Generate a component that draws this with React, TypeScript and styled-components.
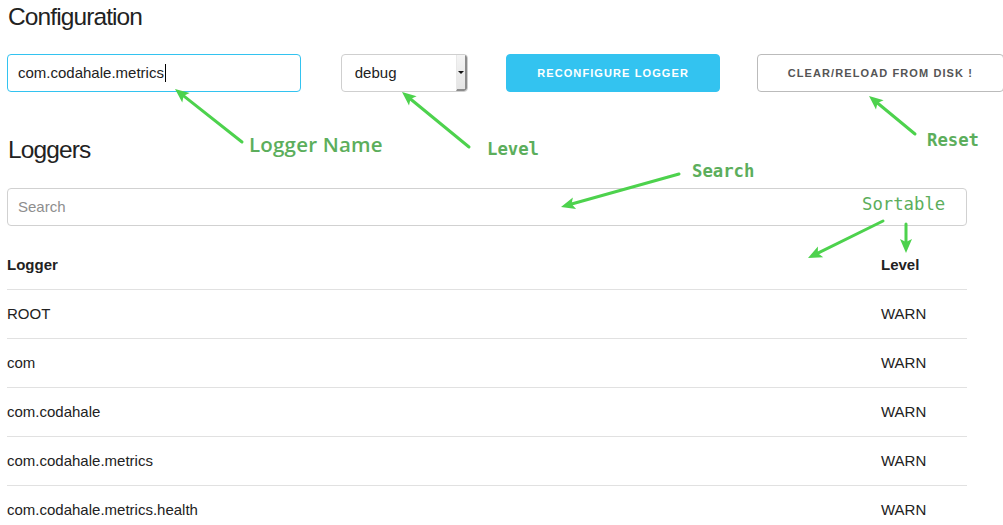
import React from "react";
import styled, { createGlobalStyle } from "styled-components";

const GlobalStyle = createGlobalStyle`
  html, body { margin: 0; padding: 0; background: #fff; }
  body {
    font-family: "Liberation Sans", Arial, Helvetica, sans-serif;
    font-size: 15px;
    line-height: 1.6;
    color: #222;
  }
  * { box-sizing: border-box; }
`;

const Page = styled.div`
  position: relative;
  width: 1003px;
  height: 525px;
  overflow: hidden;
`;

const Container = styled.div`
  width: 960px;
  margin-left: 7px;
  display: flex;
  flex-direction: column;
`;

const Heading = styled.h3<{ $top: number; $bottom: number }>`
  margin: ${(p) => p.$top}px 0 ${(p) => p.$bottom}px 1px;
  font-size: 24.5px;
  font-weight: 400;
  line-height: 30px;
  letter-spacing: -0.9px;
  color: #222;
`;

const ControlRow = styled.div`
  display: grid;
  grid-template-columns: 30.6667% 13.3333% 22% 1fr;
  column-gap: 4%;
  align-items: center;
`;

const FakeInput = styled.div<{ $focused?: boolean }>`
  height: 38px;
  padding: 0 10px;
  display: flex;
  align-items: center;
  background: #fff;
  border: 1px solid ${(p) => (p.$focused ? "#33C3F0" : "#D1D1D1")};
  border-radius: 4px;
  font-size: 15px;
  color: #222;
  white-space: nowrap;
`;

const Caret = styled.span`
  display: inline-block;
  width: 1px;
  height: 18px;
  margin-left: 1px;
  background: #000;
`;

const SelectBox = styled.div`
  height: 38px;
  display: flex;
  align-items: stretch;
  border: 1px solid #cfcfcf;
  border-radius: 4px;
  background: #fff;
  overflow: hidden;
  margin-left: 1px;
  width: 127px;
`;

const SelectValue = styled.span`
  flex: 1;
  display: flex;
  align-items: center;
  padding-left: 13px;
  font-size: 15px;
  color: #222;
`;

const SelectArrow = styled.span`
  width: 11px;
  display: flex;
  align-items: center;
  justify-content: center;
  background: linear-gradient(#f4f4f4, #e4e4e4);
  border-right: 2px solid #8c8c8c;
  border-bottom: 2px solid #8c8c8c;
  border-left: 1px solid #e8e8e8;
  border-bottom-right-radius: 3px;

  &::after {
    content: "";
    width: 0;
    height: 0;
    border-left: 3px solid transparent;
    border-right: 3px solid transparent;
    border-top: 3px solid #111;
  }
`;

const Button = styled.button<{ $primary?: boolean }>`
  justify-self: start;
  height: 38px;
  padding: 0 30px;
  border-radius: 4px;
  border: 1px solid ${(p) => (p.$primary ? "#33C3F0" : "#bbb")};
  background: ${(p) => (p.$primary ? "#33C3F0" : "transparent")};
  color: ${(p) => (p.$primary ? "#fff" : "#555")};
  font-family: "Liberation Sans", Arial, sans-serif;
  font-size: 11px;
  font-weight: 700;
  letter-spacing: 1.1px;
  text-transform: uppercase;
  white-space: nowrap;
  cursor: pointer;
  margin-left: ${(p) => (p.$primary ? "0" : "1px")};
`;

const SearchInput = styled.input`
  height: 38px;
  width: 100%;
  padding: 6px 10px 7px;
  margin: 0 0 15px 0;
  border: 1px solid #D1D1D1;
  border-radius: 4px;
  font-family: "Liberation Sans", Arial, sans-serif;
  font-size: 15px;
  color: #222;
  outline: none;
  &::placeholder { color: #8e8e8e; }
`;

const Table = styled.table`
  width: 100%;
  border-collapse: collapse;
  border-spacing: 0;
`;

const Th = styled.th<{ $narrow?: boolean }>`
  text-align: left;
  font-weight: 700;
  padding: 12px 15px;
  border-bottom: 1px solid #E1E1E1;
  line-height: 24px;
  width: ${(p) => (p.$narrow ? "101px" : "auto")};
  &:first-child { padding-left: 0; }
  &:last-child { padding-right: 0; }
`;

const Td = styled.td`
  padding: 12px 15px;
  border-bottom: 1px solid #E1E1E1;
  line-height: 24px;
  &:first-child { padding-left: 0; }
  &:last-child { padding-right: 0; }
`;

const Overlay = styled.svg`
  position: absolute;
  left: 0;
  top: 0;
  pointer-events: none;
`;

const Note = styled.span<{ $mono?: boolean; $light?: boolean }>`
  position: absolute;
  line-height: 1;
  white-space: nowrap;
  color: #5cae5c;
  font-family: ${(p) =>
    p.$mono ? '"DejaVu Sans Mono", "Liberation Mono", monospace' : '"Open Sans", "Noto Sans", sans-serif'};
  font-size: ${(p) => (p.$mono ? "17.3px" : "20.5px")};
  letter-spacing: ${(p) => (p.$mono ? "0" : "0.2px")};
  font-weight: ${(p) => (p.$light ? 400 : p.$mono ? 700 : 600)};
`;

type ArrowProps = { x1: number; y1: number; x2: number; y2: number };

const ARROW_GREEN = "#4dd24d";

function Arrow({ x1, y1, x2, y2 }: ArrowProps) {
  const dx = x2 - x1;
  const dy = y2 - y1;
  const len = Math.hypot(dx, dy);
  const ux = dx / len;
  const uy = dy / len;
  const px = -uy;
  const py = ux;
  const head = 14;
  const half = 6;
  const bx = x2 - ux * head;
  const by = y2 - uy * head;
  const nx = x2 - ux * (head - 3);
  const ny = y2 - uy * (head - 3);
  const pts = [
    [x2, y2],
    [bx + px * half, by + py * half],
    [nx, ny],
    [bx - px * half, by - py * half],
  ]
    .map((p) => p.join(","))
    .join(" ");
  return (
    <g>
      <line x1={x1} y1={y1} x2={nx} y2={ny} stroke={ARROW_GREEN} strokeWidth={3} strokeLinecap="round" />
      <polygon points={pts} fill={ARROW_GREEN} />
    </g>
  );
}

const arrows: ArrowProps[] = [
  { x1: 242, y1: 142, x2: 175, y2: 89 },
  { x1: 469, y1: 147, x2: 402, y2: 92 },
  { x1: 915, y1: 134, x2: 869, y2: 96 },
  { x1: 679, y1: 174, x2: 561, y2: 207 },
  { x1: 883, y1: 221, x2: 808, y2: 258 },
  { x1: 906, y1: 224, x2: 906, y2: 253 },
];

const loggers = [
  "ROOT",
  "com",
  "com.codahale",
  "com.codahale.metrics",
  "com.codahale.metrics.health",
];

export default function App() {
  return (
    <>
      <GlobalStyle />
      <Page>
        <Container>
          <Heading $top={2} $bottom={22}>Configuration</Heading>
          <ControlRow>
            <FakeInput $focused>
              com.codahale.metrics
              <Caret />
            </FakeInput>
            <SelectBox>
              <SelectValue>debug</SelectValue>
              <SelectArrow />
            </SelectBox>
            <Button $primary>Reconfigure Logger</Button>
            <Button>Clear/Reload from disk !</Button>
          </ControlRow>
          <Heading $top={43} $bottom={23}>Loggers</Heading>
          <SearchInput placeholder="Search" />
          <Table>
            <thead>
              <tr>
                <Th>Logger</Th>
                <Th $narrow>Level</Th>
              </tr>
            </thead>
            <tbody>
              {loggers.map((name) => (
                <tr key={name}>
                  <Td>{name}</Td>
                  <Td>WARN</Td>
                </tr>
              ))}
            </tbody>
          </Table>
        </Container>

        <Overlay width={1003} height={525} viewBox="0 0 1003 525">
          {arrows.map((a, i) => (
            <Arrow key={i} {...a} />
          ))}
        </Overlay>
        <Note style={{ left: 249, top: 134 }}>Logger Name</Note>
        <Note $mono style={{ left: 487, top: 141 }}>Level</Note>
        <Note $mono style={{ left: 927, top: 132 }}>Reset</Note>
        <Note $mono style={{ left: 692, top: 163 }}>Search</Note>
        <Note $mono $light style={{ left: 862, top: 196 }}>Sortable</Note>
      </Page>
    </>
  );
}
